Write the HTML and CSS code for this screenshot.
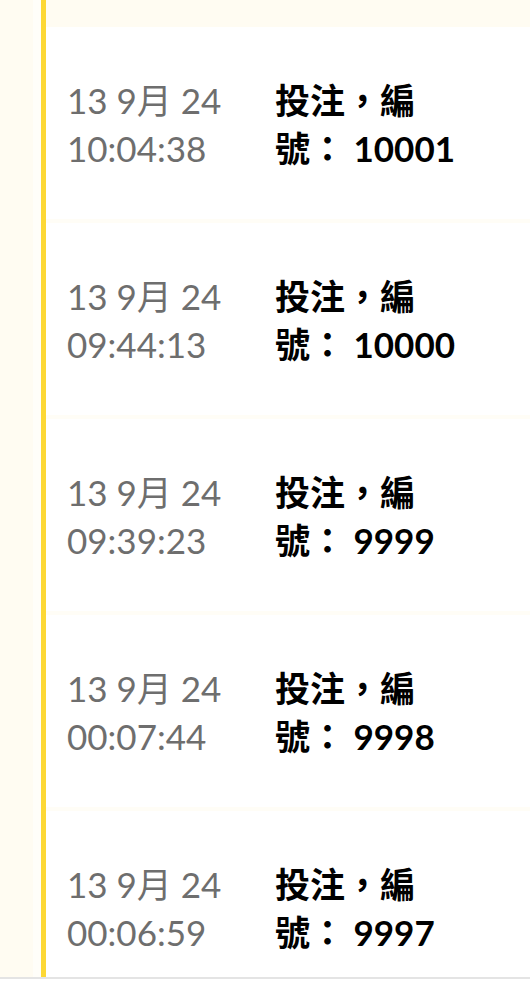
FILE: index.html
```html
<!DOCTYPE html>
<html lang="zh-Hant">
<head>
<meta charset="utf-8">
<title>投注記錄</title>
<link rel="stylesheet" href="styles.css">
</head>
<body>
<div class="panel">
  <div class="gutter"></div>
  <div class="gutter-edge"></div>
  <ul class="list">
    <li class="item">
      <div class="date"><div>13 9月 24</div><div>10:04:38</div></div>
      <div class="title">投注，編號： 10001</div>
    </li>
    <li class="item">
      <div class="date"><div>13 9月 24</div><div>09:44:13</div></div>
      <div class="title">投注，編號： 10000</div>
    </li>
    <li class="item">
      <div class="date"><div>13 9月 24</div><div>09:39:23</div></div>
      <div class="title">投注，編號： 9999</div>
    </li>
    <li class="item">
      <div class="date"><div>13 9月 24</div><div>00:07:44</div></div>
      <div class="title">投注，編號： 9998</div>
    </li>
    <li class="item">
      <div class="date"><div>13 9月 24</div><div>00:06:59</div></div>
      <div class="title">投注，編號： 9997</div>
    </li>
  </ul>
</div>
</body>
</html>
```
FILE: styles.css
```css
html, body {
  margin: 0;
  padding: 0;
  background: #ffffff;
}

body {
  font-family: Lato, "Noto Sans CJK TC", sans-serif;
}

.panel {
  display: flex;
  height: 977px;
  overflow: hidden;
  background: #fffcf2;
  border-bottom: 2px solid #e4e4e4;
}

.gutter {
  width: 33px;
  flex: none;
}

.gutter-edge {
  width: 8px;
  flex: none;
  background: #fffef9;
}

.list {
  flex: 1;
  list-style: none;
  margin: 0;
  padding: 27px 0 0 0;
  border-left: 5px solid #fdd835;
  display: flex;
  flex-direction: column;
}

.item {
  display: flex;
  flex: none;
  align-items: center;
  background: #ffffff;
  padding: 49px 0 47px 21px;
  border-bottom: 4px solid #fffdf6;
  font-size: 35px;
  line-height: 48px;
}

.date {
  width: 208px;
  flex: none;
  color: #6e6e6e;
}

.title {
  width: 190px;
  color: #000000;
  font-weight: 700;
}
```
